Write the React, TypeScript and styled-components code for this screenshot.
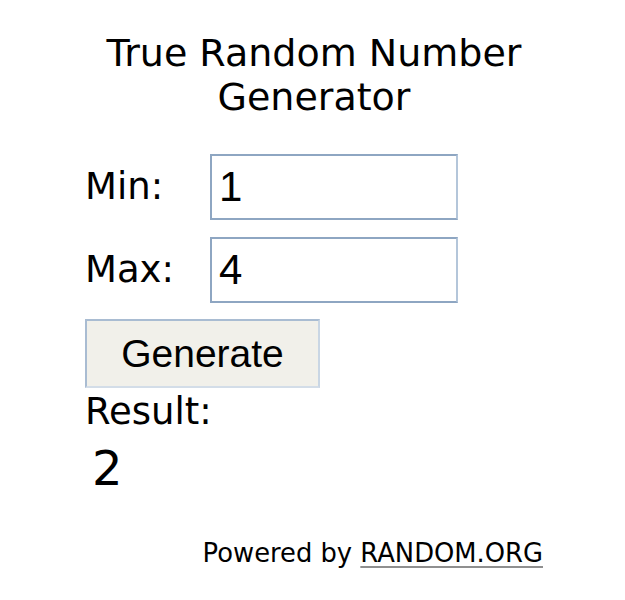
import React from "react";
import styled, { createGlobalStyle } from "styled-components";

const Global = createGlobalStyle`
  html, body { margin: 0; padding: 0; background: #ffffff; }
  body { font-family: "DejaVu Sans", Verdana, sans-serif; color: #000; }
  input, button { font-family: inherit; }
`;

const Widget = styled.div`
  width: 458px;
  margin: 31px 0 0 85px;
  display: flex;
  flex-direction: column;
  font-family: "DejaVu Sans", Verdana, sans-serif;
  font-size: 37px;
  line-height: 44px;
`;

const Title = styled.h1`
  margin: 0 0 35px 0;
  font-size: 38px;
  line-height: 44px;
  font-weight: normal;
  text-align: center;
`;

const Form = styled.div`
  display: grid;
  grid-template-columns: 125px 248px;
  row-gap: 17px;
  align-items: center;
`;

const Label = styled.label`
  display: block;
`;

const Field = styled.input`
  && {
    box-sizing: border-box;
    width: 248px;
    height: 66px;
    margin: 0;
    padding: 0 0 0 7px;
    border: 2px solid #8ea6c2;
    border-right-color: #b4c6da;
    background: #fff;
    font-family: "Liberation Sans", Arial, Helvetica, sans-serif;
    font-size: 42px;
    font-weight: normal;
    color: #000;
    outline: none;
  }
`;

const Button = styled.button`
  && {
    box-sizing: border-box;
    width: 235px;
    height: 69px;
    margin: 16px 0 2px 0;
    padding: 0;
    border: 2px solid #a9bcd2;
    border-bottom-color: #d3dde8;
    border-right-color: #c9d6e4;
    background: #f1f0ea;
    font-family: "Liberation Sans", Arial, Helvetica, sans-serif;
    font-size: 39px;
    color: #000;
    cursor: pointer;
  }
`;

const ResultLabel = styled.div``;

const ResultValue = styled.div`
  margin-top: 6px;
  padding-left: 7px;
  font-size: 48px;
  line-height: 56px;
`;

const Footer = styled.div`
  margin-top: 42px;
  text-align: right;
  font-size: 25.8px;
  line-height: 30px;
`;

const Link = styled.a`
  color: #000;
  text-decoration: underline;
  text-decoration-color: #8f8f8f;
  text-decoration-thickness: 3px;
  text-underline-offset: 4px;
`;

export default function App() {
  const [min, setMin] = React.useState("1");
  const [max, setMax] = React.useState("4");
  const [result, setResult] = React.useState("2");
  const generate = () => {
    const a = parseInt(min, 10) || 0;
    const b = parseInt(max, 10) || 0;
    setResult(String(a + Math.floor(Math.random() * (b - a + 1))));
  };
  return (
    <>
      <Global />
      <Widget>
        <Title>True Random Number Generator</Title>
        <Form>
          <Label htmlFor="min">Min:</Label>
          <Field id="min" value={min} onChange={(e) => setMin(e.target.value)} />
          <Label htmlFor="max">Max:</Label>
          <Field id="max" value={max} onChange={(e) => setMax(e.target.value)} />
        </Form>
        <div>
          <Button onClick={generate}>Generate</Button>
        </div>
        <ResultLabel>Result:</ResultLabel>
        <ResultValue>{result}</ResultValue>
        <Footer>
          Powered by <Link href="#">RANDOM.ORG</Link>
        </Footer>
      </Widget>
    </>
  );
}
